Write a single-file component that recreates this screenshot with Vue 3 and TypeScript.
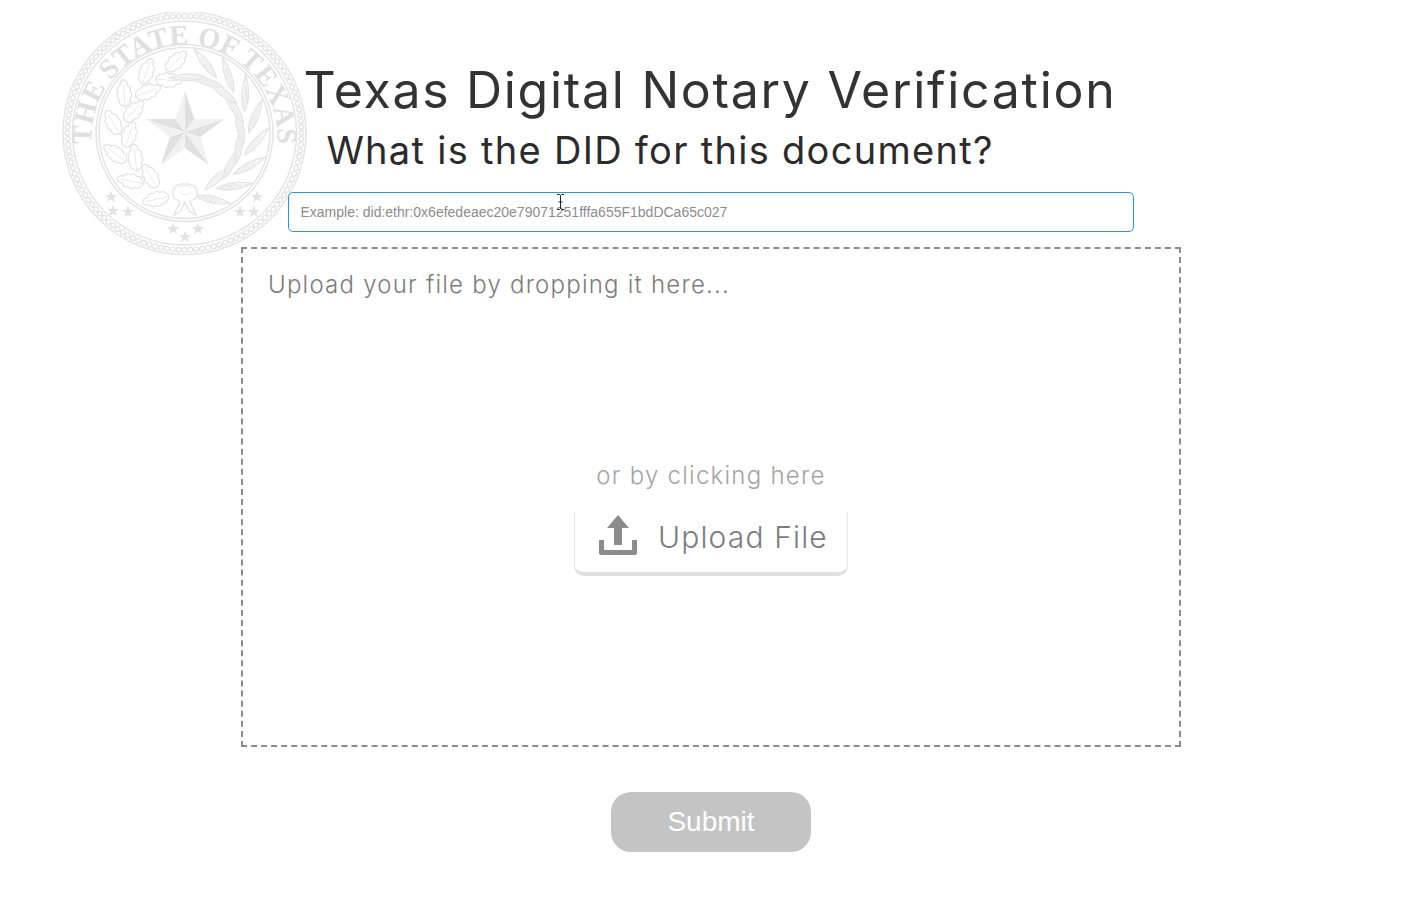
<script setup lang="ts">
import { computed } from "vue";

const cx = 122.5;
const cy = 121;

const polar = (r: number, deg: number) => {
  const a = (deg * Math.PI) / 180;
  return [cx + r * Math.cos(a), cy + r * Math.sin(a)];
};

// бусины по внешнему кольцу печати
const beads = computed(() => {
  const list: { x: number; y: number }[] = [];
  for (let i = 0; i < 124; i++) {
    const [x, y] = polar(117, (i * 360) / 124);
    list.push({ x, y });
  }
  return list;
});

const star = (x: number, y: number, r: number) => {
  const pts: string[] = [];
  for (let i = 0; i < 10; i++) {
    const a = ((-90 + i * 36) * Math.PI) / 180;
    const rr = i % 2 ? r * 0.4 : r;
    pts.push(`${(x + rr * Math.cos(a)).toFixed(1)},${(y + rr * Math.sin(a)).toFixed(1)}`);
  }
  return pts.join(" ");
};

const smallStars = [
  [49, 185], [51, 199], [66, 200],
  [195, 185], [192, 200], [178, 200],
  [111, 217], [123, 225], [136, 217],
].map(([x, y]) => star(x, y, 6.5));

// грани большой звезды
const bigFacets = computed(() => {
  const R = 41;
  const r = 16;
  const out: { d: string; dark: boolean }[] = [];
  for (let i = 0; i < 10; i++) {
    const a1 = ((-90 + i * 36) * Math.PI) / 180;
    const a2 = ((-90 + (i + 1) * 36) * Math.PI) / 180;
    const r1 = i % 2 ? r : R;
    const r2 = i % 2 ? R : r;
    const sx = 123;
    const sy = 120;
    out.push({
      d: `M${sx} ${sy}L${(sx + r1 * Math.cos(a1)).toFixed(1)} ${(sy + r1 * Math.sin(a1)).toFixed(1)}L${(sx + r2 * Math.cos(a2)).toFixed(1)} ${(sy + r2 * Math.sin(a2)).toFixed(1)}Z`,
      dark: i % 2 === 0,
    });
  }
  return out;
});

// лист: длина вдоль направления, ширина поперёк
const leaf = (r: number, deg: number, tilt: number, len: number, w: number, lobed: boolean) => {
  const [x, y] = polar(r, deg);
  const dir = ((deg + tilt) * Math.PI) / 180;
  const ux = Math.cos(dir);
  const uy = Math.sin(dir);
  const p = (t: number, s: number) =>
    `${(x + ux * t * len - uy * s * w).toFixed(1)} ${(y + uy * t * len + ux * s * w).toFixed(1)}`;
  if (lobed) {
    const outline = `M${p(0, 0)}Q${p(0.1, 0.9)} ${p(0.3, 0.7)}Q${p(0.4, 1.15)} ${p(0.55, 0.75)}Q${p(0.7, 1.05)} ${p(0.78, 0.45)}Q${p(0.95, 0.5)} ${p(1, 0)}Q${p(0.95, -0.5)} ${p(0.78, -0.45)}Q${p(0.7, -1.05)} ${p(0.55, -0.75)}Q${p(0.4, -1.15)} ${p(0.3, -0.7)}Q${p(0.1, -0.9)} ${p(0, 0)}Z`;
    return { outline, rib: `M${p(0, 0)}L${p(0.85, 0)}` };
  }
  const outline = `M${p(0, 0)}Q${p(0.4, 1.1)} ${p(1, 0)}Q${p(0.4, -1.1)} ${p(0, 0)}Z`;
  return {
    outline,
    rib: `M${p(0, 0)}L${p(0.92, 0)}M${p(0.15, 0.2)}L${p(0.7, 0.2)}M${p(0.15, -0.2)}L${p(0.7, -0.2)}M${p(0.25, 0.42)}L${p(0.55, 0.42)}M${p(0.25, -0.42)}L${p(0.55, -0.42)}`,
  };
};

const wreath = computed(() => {
  const out: { outline: string; rib: string }[] = [];
  // дуб слева
  for (let i = 0; i < 13; i++) {
    const deg = 104 + i * 12.5;
    const outer = i % 2 === 0;
    out.push(leaf(outer ? 65 : 61, deg, outer ? 62 : 122, 27, 8, true));
  }
  // олива справа
  for (let i = 0; i < 16; i++) {
    const deg = 80 - i * 10;
    const outer = i % 2 === 0;
    out.push(leaf(outer ? 64 : 60, deg, outer ? -68 : -112, 36, 6, false));
  }
  return out;
});
</script>

<template>
  <div class="page">
    <svg class="seal" viewBox="0 0 245 245" width="245" height="245" aria-hidden="true">
      <circle cx="122.5" cy="121" r="121.500" class="line" />
      <circle cx="122.5" cy="121" r="112" class="line" />
      <circle v-for="(b, i) in beads" :key="i" :cx="b.x" :cy="b.y" r="2.4" class="bead" />
      <defs>
        <path id="sealArc" d="M 31 142 A 93 93 0 1 1 214 142" fill="none" />
      </defs>
      <text class="seal-text" text-anchor="middle">
        <textPath href="#sealArc" startOffset="50%">THE STATE OF TEXAS</textPath>
      </text>
      <circle cx="122.5" cy="121" r="88.5" class="line" />
      <circle cx="122.5" cy="121" r="85.5" class="line" />
      <g v-for="(l, i) in wreath" :key="i">
        <path :d="l.outline" class="leaf" />
        <path :d="l.rib" class="rib" />
      </g>
      <path d="M112 186c-4-9 3-15 11-14 8-1 15 5 11 14-3 3-5 1-6 4l6 13-7-4-4-9-4 9-7 4 6-13c-1-3-3-1-6-4z" class="leaf" />
      <path d="M116 176c4-3 10-3 14 0M118 181c3 2 7 2 10 0" class="rib" />
      <path v-for="(f, i) in bigFacets" :key="i" :d="f.d" :class="f.dark ? 'facet-dark' : 'facet-light'" />
      <polygon v-for="(s, i) in smallStars" :key="i" :points="s" class="small-star" />
    </svg>

    <h1 class="title">Texas Digital Notary Verification</h1>
    <h2 class="subtitle">What is the DID for this document?</h2>
    <input class="did-input" type="text" placeholder="Example: did:ethr:0x6efedeaec20e79071251fffa655F1bdDCa65c027" />

    <div class="dropzone">
      <div class="drop-label">Upload your file by dropping it here...</div>
      <div class="drop-center">
        <div class="click-label">or by clicking here</div>
        <button type="button" class="upload-btn">
          <svg class="upload-icon" width="40" height="42" viewBox="0 0 40 42" aria-hidden="true">
            <path d="M20 1 31 14H24V31H16V14H9Z" fill="#8c8c8c" />
            <path d="M1 26H6V36H34V26H39V39a2 2 0 0 1-2 2H3a2 2 0 0 1-2-2Z" fill="#8c8c8c" />
          </svg>
          <span>Upload File</span>
        </button>
      </div>
    </div>

    <button type="button" class="submit" disabled>Submit</button>

    <svg class="cursor" width="9" height="16" viewBox="0 0 9 16" aria-hidden="true">
      <path d="M1 .5H3.5L4.5 1.5 5.5 .5H8M4.5 1.5V14.5M1 15.5H3.5L4.5 14.5 5.5 15.5H8M2.5 8H6.500" fill="none" stroke="#222" stroke-width="1" />
    </svg>
  </div>
</template>

<style scoped>
.page {
  position: relative;
  width: 1422px;
  height: 906px;
  box-sizing: border-box;
  padding-top: 60px;
  display: flex;
  flex-direction: column;
  align-items: center;
  background: #fff;
  overflow: hidden;
  font-family: Inter, "Open Sans", sans-serif;
}

.seal {
  position: absolute;
  left: 62px;
  top: 12px;
}

.line {
  fill: none;
  stroke: #e4e4e4;
  stroke-width: 1.5;
}

.bead {
  fill: #fff;
  stroke: #e2e2e2;
  stroke-width: 1.2;
}

.seal-text {
  font-family: "Liberation Serif", serif;
  font-size: 28px;
  font-weight: 700;
  letter-spacing: 0.4px;
  fill: #e0e0e0;
}

.leaf {
  fill: #fff;
  stroke: #e2e2e2;
  stroke-width: 1.2;
}

.rib {
  fill: none;
  stroke: #e6e6e6;
  stroke-width: 0.9;
}

.facet-dark {
  fill: #e0e0e0;
}

.facet-light {
  fill: #f1f1f1;
}

.small-star {
  fill: #e2e2e2;
}

.title {
  position: relative;
  margin: 0 2px 0 0;
  font-size: 50px;
  line-height: 60px;
  font-weight: 400;
  letter-spacing: 1.7px;
  color: #333;
  white-space: nowrap;
}

.subtitle {
  position: relative;
  margin: 0 102px 0 0;
  font-size: 38px;
  line-height: 60px;
  font-weight: 400;
  letter-spacing: 1.29px;
  color: #2b2b2b;
  white-space: nowrap;
}

.did-input {
  position: relative;
  box-sizing: border-box;
  width: 846px;
  height: 40px;
  margin-top: 12px;
  padding: 0 11.5px;
  border: 1px solid #2196f3;
  border-radius: 5px;
  outline: none;
  background: transparent;
  font-family: "Liberation Sans", Arial, sans-serif;
  font-size: 14px;
  color: #333;
}

.did-input::placeholder {
  color: #8c8c8c;
  opacity: 1;
}

.dropzone {
  position: relative;
  box-sizing: border-box;
  width: 940px;
  height: 500px;
  margin-top: 15px;
  padding: 19px 25px 0;
  border: 2px dashed #8c8c8c;
  display: flex;
  flex-direction: column;
}

.drop-label {
  font-size: 24px;
  font-weight: 300;
  line-height: 34px;
  color: #7c7c7c;
  letter-spacing: 1.23px;
}

.drop-center {
  margin-top: 158px;
  display: flex;
  flex-direction: column;
  align-items: center;
}

.click-label {
  font-size: 24px;
  font-weight: 300;
  line-height: 32px;
  color: #a4a4a4;
  letter-spacing: 1.25px;
}

.upload-btn {
  box-sizing: border-box;
  width: 274px;
  height: 64px;
  margin-top: 20px;
  padding: 0 0 10px 23px;
  display: flex;
  align-items: center;
  gap: 20px;
  border: 1px solid #e6e6e6;
  border-top: none;
  border-bottom: 4px solid #e0e0e0;
  border-radius: 0 0 10px 10px;
  background: #fff;
  font-family: inherit;
  font-size: 30px;
  font-weight: 300;
  letter-spacing: 1.15px;
  color: #7c7c7c;
  white-space: nowrap;
}

.upload-icon {
  margin-top: -4px;
}

.submit {
  position: relative;
  width: 200px;
  height: 60px;
  margin-top: 45px;
  border: none;
  border-radius: 20px;
  background: #c4c4c4;
  color: #fff;
  font-family: "Liberation Sans", Arial, sans-serif;
  font-size: 28px;
}

.cursor {
  position: absolute;
  left: 556px;
  top: 194px;
}
</style>

<style>
body {
  background: #fff;
}
</style>
